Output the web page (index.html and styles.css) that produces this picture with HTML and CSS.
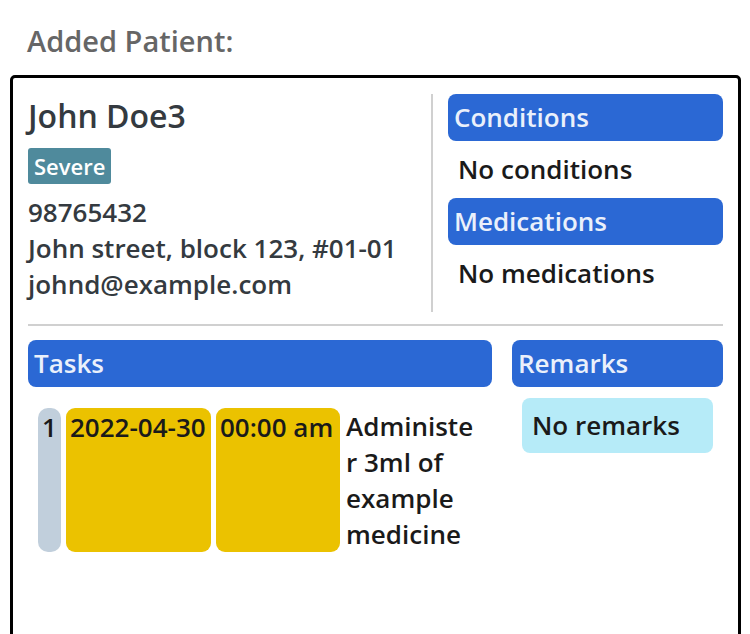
FILE: index.html
```html
<!DOCTYPE html>
<html lang="en">
<head>
    <meta charset="UTF-8">
    <meta name="viewport" content="width=device-width, initial-scale=1.0">
    <title>Added Patient</title>
    <link rel="stylesheet" href="styles.css">
</head>
<body>
    <div class="page">
        <h2 class="page-title">Added Patient:</h2>

        <div class="patient-card">
            <div class="top-row">
                <div class="details">
                    <h1 class="name">John Doe3</h1>
                    <span class="badge">Severe</span>
                    <p>98765432</p>
                    <p>John street, block 123, #01-01</p>
                    <p>johnd@example.com</p>
                </div>
                <div class="divider"></div>
                <div class="side">
                    <div class="section-head">Conditions</div>
                    <p class="empty">No conditions</p>
                    <div class="section-head">Medications</div>
                    <p class="empty">No medications</p>
                </div>
            </div>

            <hr class="rule">

            <div class="bottom-row">
                <div class="tasks">
                    <div class="section-head">Tasks</div>
                    <div class="task-list">
                        <div class="task">
                            <span class="task-index">1</span>
                            <span class="task-date">2022-04-30</span>
                            <span class="task-time">00:00 am</span>
                            <span class="task-desc">Administer 3ml of example medicine</span>
                        </div>
                    </div>
                </div>
                <div class="remarks">
                    <div class="section-head">Remarks</div>
                    <div class="remark-box">No remarks</div>
                </div>
            </div>
        </div>
    </div>
</body>
</html>
```

FILE: styles.css
```css
body {
    font-family: 'Open Sans', 'Noto Sans', sans-serif;
    background-color: #fff;
    margin: 0;
    padding: 0;
}

.page {
    padding: 0 9px 0 10px;
}

.page-title {
    margin: 0 0 17px 0;
    padding: 24px 0 0 17px;
    font-size: 29px;
    font-weight: 600;
    color: #666;
    line-height: 34px;
}

.patient-card {
    border: 3px solid #000;
    border-radius: 5px;
    padding: 16px 15px 15px 15px;
    min-height: 540px;
}

.top-row {
    display: grid;
    grid-template-columns: 388px 2px 1fr;
    column-gap: 15px;
}

.details .name {
    margin: 0;
    font-size: 32px;
    font-weight: 600;
    color: #343a40;
    line-height: 44px;
}

.badge {
    display: inline-block;
    margin: 10px 0 10px 0;
    padding: 0 6px;
    background: #4f8a9c;
    color: #fff;
    font-size: 22px;
    font-weight: 600;
    line-height: 36px;
    border-radius: 3px;
}

.details p {
    margin: 0;
    font-size: 26px;
    font-weight: 600;
    color: #343a40;
    line-height: 36px;
}

.divider {
    background: #d0d0d0;
    height: 218px;
}

.section-head {
    background: #2b68d4;
    color: #eaf0fb;
    font-size: 26px;
    font-weight: 600;
    line-height: 47px;
    padding: 0 6px;
    border-radius: 8px;
}

.side .empty {
    margin: 0;
    padding: 0 10px;
    font-size: 26px;
    font-weight: 600;
    color: #1a1a1a;
    line-height: 57px;
}

.rule {
    border: none;
    border-top: 2px solid #d0d0d0;
    margin: 12px 0 14px 0;
}

.bottom-row {
    display: grid;
    grid-template-columns: 464px 1fr;
    column-gap: 20px;
}

.task-list {
    padding: 21px 10px 0 10px;
}

.task {
    display: flex;
    gap: 5px;
    font-size: 26px;
    font-weight: 600;
    color: #1a1a1a;
    line-height: 36px;
}

.task-index {
    background: #c1cfdc;
    border-radius: 10px;
    width: 23px;
    text-align: center;
    line-height: 38px;
}

.task-date, .task-time {
    background: #ebc200;
    border-radius: 9px;
    padding: 0 4px;
    line-height: 38px;
}

.task-date {
    width: 137px;
}

.task-time {
    width: 116px;
}

.task-desc {
    width: 130px;
    margin-left: 1px;
    overflow-wrap: anywhere;
}

.remark-box {
    margin: 11px 10px 0 10px;
    background: #b6ebf8;
    border-radius: 8px;
    padding: 0 10px;
    font-size: 26px;
    font-weight: 600;
    color: #1a1a1a;
    line-height: 55px;
}
```
